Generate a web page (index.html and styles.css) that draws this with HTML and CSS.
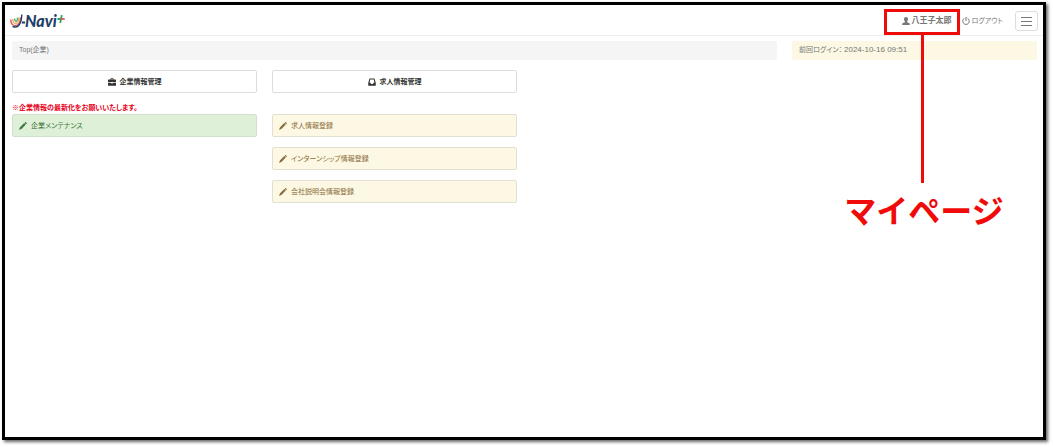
FILE: index.html
```html
<!DOCTYPE html>
<html lang="ja">
<head>
    <meta charset="UTF-8">
    <meta name="viewport" content="width=device-width, initial-scale=1.0">
    <title>J-Navi+</title>
    <link rel="stylesheet" href="styles.css">
</head>
<body>
    <!-- Shared icons -->
    <svg class="sprite" aria-hidden="true">
        <symbol id="pencil" viewBox="0 0 16 16">
            <path d="M0 16l2-5.500L10.500 2l3 3L5.500 13.500zM11.300 1.300L12.500.2q.6-.4 1.200.1l1.800 1.800q.5.600 0 1.200l-1.200 1.200z"/>
        </symbol>
    </svg>

    <div class="screen">
        <header class="navbar">
            <a class="brand" href="#" aria-label="J-Navi+">
                <svg class="brand-mark" viewBox="0 0 15 14" aria-hidden="true">
                    <g fill="none" stroke-width="1.400">
                        <path d="M.8 5.500c-.3 8 9 9 9.700-2" stroke="#e0564f"/>
                        <path d="M2.700 5c0 6 5.800 6.500 6.300-1.500" stroke="#f0b264"/>
                        <path d="M4.600 4.500c.2 4 2.800 4 3-1" stroke="#52ad76"/>
                        <path d="M2.500 12.300C8 15 11.500 10 11.800.5" stroke="#1f3f68"/>
                    </g>
                    <path d="M12 7.500h3v2h-3.300z" fill="#1f3f68"/>
                </svg>
                <span class="brand-name">Navi</span>
                <svg class="brand-plus" viewBox="0 0 8 8" aria-hidden="true">
                    <path d="M4.800 0L3.200 8M.5 4h3.500" stroke="#3a9c62" stroke-width="1.800"/>
                    <path d="M4 4h3.700" stroke="#dc5a50" stroke-width="1.800"/>
                </svg>
            </a>
            <nav class="nav-right">
                <a class="nav-link user" href="#">
                    <svg class="icon" viewBox="0 0 16 16"><path d="M8 0c2.500 0 4 1.700 4 4.500 0 2-.8 3.500-1.800 4.500v1.500l4 1.700q1.300.6 1.300 1.800v2H.5v-2q0-1.200 1.300-1.800l4-1.700V9C4.800 8 4 6.500 4 4.500 4 1.700 5.500 0 8 0z"/></svg>
                    <span>八王子太郎</span>
                </a>
                <a class="nav-link" href="#">
                    <svg class="icon" viewBox="0 0 16 16"><path d="M5 2.500a6.500 6.500 0 1 0 6 0M8 0v8" fill="none" stroke="currentColor" stroke-width="2"/></svg>
                    <span>ログアウト</span>
                </a>
                <button class="toggle" type="button" aria-label="メニュー">
                    <span class="bar"></span>
                    <span class="bar"></span>
                    <span class="bar"></span>
                </button>
                <div class="callout">
                    <div class="callout-box"></div>
                    <div class="callout-line"></div>
                    <div class="callout-text">マイページ</div>
                </div>
            </nav>
        </header>

        <main class="content">
            <div class="breadcrumb">Top(企業)</div>
            <div class="last-login">前回ログイン： <span class="date">2024-10-16 09:51</span></div>

            <section class="column">
                <button class="heading" type="button">
                    <svg class="icon" viewBox="0 0 16 16"><path d="M5 3V1.500Q5 .5 6 .5h4q1 0 1 1V3h4q1 0 1 1v4.500H9.500V8h-3v.5H0V4q0-1 1-1zm1.500 0h3V2h-3zM0 10h6.500v1h3v-1H16v4.500q0 1-1 1H1q-1 0-1-1z"/></svg>
                    <span>企業情報管理</span>
                </button>
                <p class="notice">※企業情報の最新化をお願いいたします。</p>
                <a class="item green" href="#"><svg class="icon"><use href="#pencil"/></svg><span>企業メンテナンス</span></a>
            </section>

            <section class="column">
                <button class="heading" type="button">
                    <svg class="icon" viewBox="0 0 16 16"><path d="M3 1h10l2.500 8.500V15.500H.5V9.500zm1.500 2L3 9.500h2l1 2.500h4l1-2.500h2L11.500 3z"/></svg>
                    <span>求人情報管理</span>
                </button>
                <p class="notice"></p>
                <a class="item" href="#"><svg class="icon"><use href="#pencil"/></svg><span>求人情報登録</span></a>
                <a class="item" href="#"><svg class="icon"><use href="#pencil"/></svg><span>インターンシップ情報登録</span></a>
                <a class="item" href="#"><svg class="icon"><use href="#pencil"/></svg><span>会社説明会情報登録</span></a>
            </section>
        </main>
    </div>
</body>
</html>
```
FILE: styles.css
```css
* {
    box-sizing: border-box;
}

body {
    margin: 0;
    padding: 2px 7px 7px 2px;
    height: 100vh;
    background: #fff;
    color: #777;
    font-family: "Liberation Sans", "Noto Sans CJK JP", sans-serif;
    font-size: 7px;
    line-height: 10px;
    font-feature-settings: "palt";
}

a {
    color: inherit;
    text-decoration: none;
}

button {
    font: inherit;
    font-feature-settings: inherit;
    cursor: pointer;
}

.sprite {
    display: none;
}

.icon {
    width: 8px;
    height: 8px;
    fill: currentColor;
    flex: none;
}

.screen {
    height: 100%;
    border: 3px solid #000;
    box-shadow: 2px 2px 3px rgba(0, 0, 0, 0.6);
}

/* Header */
.navbar {
    display: flex;
    justify-content: space-between;
    align-items: center;
    height: 31px;
    padding: 2px 5px 0;
    border-bottom: 1px solid #eee;
}

.brand {
    display: flex;
    align-items: center;
}

.brand-mark {
    width: 15px;
    height: 14px;
}

.brand-name {
    color: #1f3f68;
    font-family: Lato, sans-serif;
    font-size: 16px;
    font-weight: 900;
    font-style: italic;
    line-height: 16px;
}

.brand-plus {
    width: 8px;
    height: 8px;
    margin-bottom: 5px;
}

.nav-right {
    position: relative;
    display: flex;
    align-items: center;
}

.nav-link {
    display: flex;
    align-items: center;
    gap: 2px;
    margin-right: 12px;
}

.user {
    margin-right: 10px;
    font-size: 8px;
    font-weight: bold;
}

.toggle {
    display: flex;
    flex-direction: column;
    align-items: center;
    justify-content: center;
    gap: 3px;
    width: 23px;
    height: 20px;
    padding: 0;
    background: #fff;
    border: 1px solid #ddd;
    border-radius: 3px;
}

.bar {
    width: 11px;
    height: 1px;
    background: #777;
}

/* Red callout over the page */
.callout {
    position: absolute;
    top: -2px;
    right: 78px;
    width: 76px;
    display: flex;
    flex-direction: column;
    align-items: center;
    pointer-events: none;
}

.callout-box {
    width: 100%;
    height: 26px;
    border: 3px solid #f00b0b;
}

.callout-line {
    width: 3px;
    height: 148px;
    background: #f00b0b;
}

.callout-text {
    margin-top: 6px;
    padding-left: 4px;
    color: #f00b0b;
    font-family: "Noto Sans CJK JP", sans-serif;
    font-size: 32px;
    font-weight: bold;
    font-feature-settings: normal;
    line-height: 40px;
    white-space: nowrap;
}

/* Content */
.content {
    display: grid;
    grid-template-columns: repeat(4, 1fr);
    column-gap: 15px;
    row-gap: 10px;
    padding: 5px 6px 0 7px;
}

.breadcrumb,
.last-login {
    height: 19px;
    padding: 4px 7px;
    border-radius: 2px;
    background: #f5f5f5;
}

.breadcrumb {
    grid-column: span 3;
}

.last-login {
    background: #fcf8e3;
}

.date {
    font-size: 8px;
}

.column {
    display: flex;
    flex-direction: column;
}

.heading {
    display: flex;
    justify-content: center;
    align-items: center;
    gap: 4px;
    height: 23px;
    background: #fff;
    border: 1px solid #ddd;
    border-radius: 2px;
    color: #333;
    font-weight: bold;
}

.notice {
    height: 11px;
    margin: 10px 0 0;
    color: #e60020;
    font-weight: bold;
}

.item {
    display: flex;
    align-items: center;
    gap: 4px;
    height: 23px;
    margin-bottom: 10px;
    padding: 0 6px;
    background: #fcf8e3;
    border: 1px solid #e2e0d2;
    border-radius: 2px;
    color: #8a6d3b;
}

.green {
    background: #dff0d8;
    border-color: #d3e0ce;
    color: #3c763d;
}
```
